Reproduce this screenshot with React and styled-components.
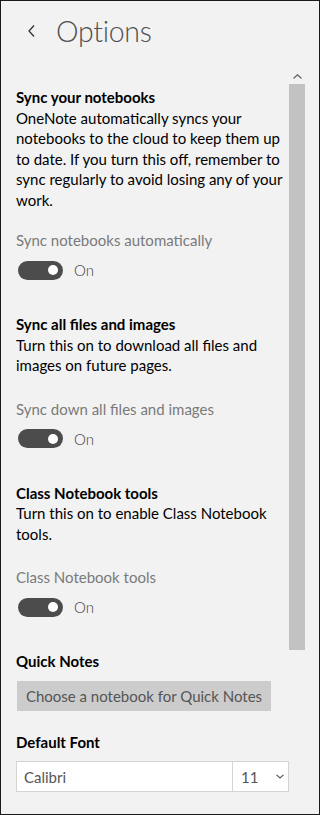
import React from "react";
import styled, { createGlobalStyle } from "styled-components";

const GlobalStyle = createGlobalStyle`
  html, body {
    margin: 0;
    padding: 0;
    background: #ffffff;
  }
  * {
    box-sizing: border-box;
  }
`;

const Panel = styled.div`
  width: 320px;
  height: 815px;
  border: 1px solid #1a1a1a;
  background: #f2f2f2;
  font-family: Lato, "Open Sans", "Liberation Sans", sans-serif;
  display: flex;
  flex-direction: column;
  overflow: hidden;
`;

const Header = styled.header`
  height: 67px;
  display: flex;
  align-items: center;
  padding: 0 0 7px 25px;
  gap: 20px;
`;

const BackButton = styled.button`
  border: 0;
  background: none;
  padding: 0;
  width: 10px;
  height: 14px;
  display: flex;
  align-items: center;
  justify-content: center;
  color: #333;
`;

const PageTitle = styled.h1`
  margin: 0;
  font-weight: 300;
  font-size: 28.5px;
  color: #505050;
  letter-spacing: -0.3px;
`;

const Scroller = styled.div`
  position: relative;
  flex: 1;
  padding: 19px 30px 0 15px;
`;

const ScrollBar = styled.div`
  position: absolute;
  top: 0;
  left: 288px;
  width: 16px;
  display: flex;
  flex-direction: column;
`;

const ScrollArrow = styled.div`
  height: 16px;
  display: flex;
  align-items: center;
  justify-content: center;
  color: #606060;
`;

const ScrollThumb = styled.div`
  height: 566px;
  background: #c2c2c2;
`;

const Section = styled.section`
  margin-bottom: ${(p) => p.$gap || 0}px;
`;

const SectionTitle = styled.h2`
  margin: 0;
  font-size: 15px;
  line-height: 20.5px;
  font-weight: 700;
  color: #000;
`;

const Body = styled.p`
  margin: 0;
  font-size: 15px;
  line-height: 20.5px;
  color: #000;
`;

const Label = styled.div`
  margin-top: ${(p) => p.$top}px;
  font-size: 15px;
  line-height: 20px;
  font-weight: 400;
  color: #7a7a7a;
`;

const ToggleRow = styled.div`
  margin-top: 10px;
  height: 20px;
  display: flex;
  align-items: center;
  gap: 11px;
  padding-left: 2px;
`;

const Track = styled.div`
  width: 45px;
  height: 19px;
  border-radius: 10px;
  background: ${(p) => (p.$on ? "#4c4c4c" : "transparent")};
  border: ${(p) => (p.$on ? "none" : "2px solid #4c4c4c")};
  display: flex;
  align-items: center;
  justify-content: ${(p) => (p.$on ? "flex-end" : "flex-start")};
  padding: 0 5px;
`;

const Knob = styled.div`
  width: 10px;
  height: 10px;
  border-radius: 50%;
  background: #ffffff;
`;

const ToggleText = styled.span`
  font-size: 15px;
  font-weight: 300;
  color: #3c3c3c;
`;

const GreyButton = styled.button`
  margin: 9px 0 0 1px;
  width: 254px;
  height: 30px;
  border: 0;
  background: #cccccc;
  color: #555;
  font-family: inherit;
  font-size: 15px;
  font-weight: 400;
  padding: 0;
`;

const FontPicker = styled.div`
  margin-top: 9px;
  height: 31px;
  display: flex;
  background: #ffffff;
  border: 1px solid #d4d4d4;
`;

const FontField = styled.div`
  flex: 1;
  display: flex;
  align-items: center;
  padding-left: 7px;
  font-size: 15px;
  font-weight: 400;
  color: #555;
  border-right: 1px solid #d4d4d4;
`;

const SizeField = styled.div`
  width: 55px;
  display: flex;
  align-items: center;
  justify-content: space-between;
  padding: 0 4px 0 8px;
  font-size: 15px;
  font-weight: 400;
  color: #555;
`;

const Chevron = ({ d, w, h, sw = 1.2 }) => (
  <svg width={w} height={h} viewBox={`0 0 ${w} ${h}`} fill="none">
    <path d={d} stroke="currentColor" strokeWidth={sw} />
  </svg>
);

const Toggle = ({ on, label, top }) => (
  <>
    <Label $top={top}>{label}</Label>
    <ToggleRow>
      <Track $on={on}>
        <Knob />
      </Track>
      <ToggleText>{on ? "On" : "Off"}</ToggleText>
    </ToggleRow>
  </>
);

const settings = [
  {
    title: "Sync your notebooks",
    text: "OneNote automatically syncs your notebooks to the cloud to keep them up to date. If you turn this off, remember to sync regularly to avoid losing any of your work.",
    label: "Sync notebooks automatically",
    top: 20,
  },
  {
    title: "Sync all files and images",
    text: "Turn this on to download all files and images on future pages.",
    label: "Sync down all files and images",
    top: 23,
  },
  {
    title: "Class Notebook tools",
    text: "Turn this on to enable Class Notebook tools.",
    label: "Class Notebook tools",
    top: 23,
  },
];

export default function App() {
  return (
    <>
      <GlobalStyle />
      <Panel>
        <Header>
          <BackButton aria-label="Back">
            <Chevron w={7} h={12} d="M6 0.5 L1 6 L6 11.5" sw={1.3} />
          </BackButton>
          <PageTitle>Options</PageTitle>
        </Header>
        <Scroller>
          <ScrollBar>
            <ScrollArrow>
              <Chevron w={9} h={5} d="M0.5 4.5 L4.5 0.8 L8.5 4.5" sw={1.2} />
            </ScrollArrow>
            <ScrollThumb />
          </ScrollBar>
          {settings.map((s) => (
            <Section key={s.title} $gap={34}>
              <SectionTitle>{s.title}</SectionTitle>
              <Body>{s.text}</Body>
              <Toggle on label={s.label} top={s.top} />
            </Section>
          ))}
          <Section $gap={21}>
            <SectionTitle>Quick Notes</SectionTitle>
            <GreyButton>Choose a notebook for Quick Notes</GreyButton>
          </Section>
          <Section>
            <SectionTitle>Default Font</SectionTitle>
            <FontPicker>
              <FontField>Calibri</FontField>
              <SizeField>
                11
                <Chevron w={8} h={5} d="M0.5 0.8 L4 4 L7.5 0.8" sw={1.1} />
              </SizeField>
            </FontPicker>
          </Section>
        </Scroller>
      </Panel>
    </>
  );
}
